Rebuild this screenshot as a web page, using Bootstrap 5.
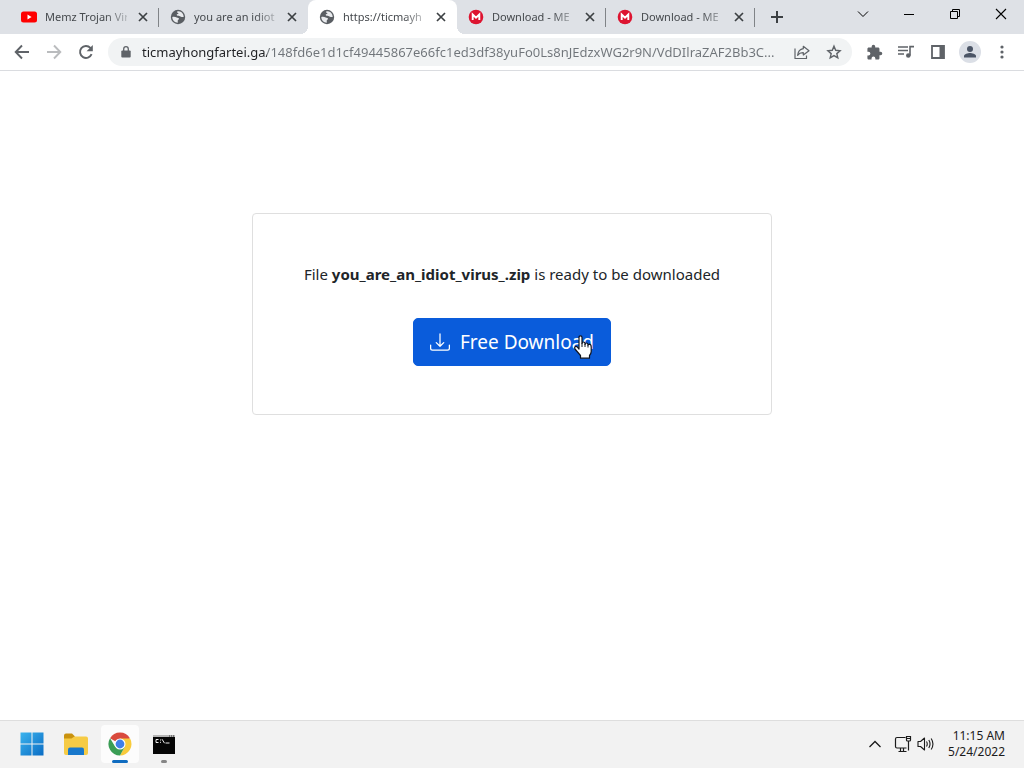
<!DOCTYPE html>
<html lang="en">
<head>
<meta charset="utf-8">
<meta name="viewport" content="width=device-width, initial-scale=1">
<title>Free Download</title>
<link href="https://cdn.jsdelivr.net/npm/bootstrap@5.3.0/dist/css/bootstrap.min.css" rel="stylesheet">
<style>
  body { font-family: "Noto Sans", "Open Sans", sans-serif; font-size: 11px; background: #fff; color: #212529; }
  button { color: inherit; }
  svg { display: block; flex: none; }
  .plain { border: 0; padding: 0; background: transparent; display: flex; align-items: center; justify-content: center; flex: none; }

  /* tab strip */
  .strip { background: #dee1e6; height: 34px; padding-left: 10px; }
  .tab-item { width: 149px; padding: 0 8px 0 11px; gap: 8px; color: #45494d; position: relative; }
  .tab-item.ruled::after { content: ""; position: absolute; right: 0; top: 8px; width: 1px; height: 19px; background: #808387; }
  .tab-item.current { background: #fff; border-radius: 8px 8px 0 0; }
  .tab-item.current::before { content: ""; position: absolute; left: -8px; right: -8px; bottom: 0; height: 8px;
    background: radial-gradient(circle at 0 0, transparent 8px, #fff 8px) left / 8px 8px no-repeat,
                radial-gradient(circle at 100% 0, transparent 8px, #fff 8px) right / 8px 8px no-repeat; }
  .tab-title { color: inherit; text-decoration: none; font-size: 11px; line-height: 18px; white-space: nowrap; overflow: hidden;
    -webkit-mask-image: linear-gradient(to right, #000 60px, transparent 90px); mask-image: linear-gradient(to right, #000 60px, transparent 90px); }
  .tab-close { width: 16px; height: 16px; color: #3c4043; }
  .tab-new { width: 28px; height: 28px; margin: 3px 0 0 8px; color: #3c4043; }
  .win-btn { width: 46px; height: 28px; color: #000; }

  /* toolbar */
  .toolbar { height: 37px; padding: 0 6px; border-bottom: 1px solid #dadce0; color: #5f6368; background: #fff; }
  .tool-btn { width: 32px; height: 32px; }
  .omnibox { height: 28px; border-radius: 14px; background: #f1f3f4; padding: 0 2px 0 10px; margin: 0 6px; }
  .omnibox input { border: 0; outline: 0; padding: 0; margin-left: 8px; font-size: 13px; line-height: 20px; color: #5f6368;
    background: linear-gradient(to right, #202124 125px, #70757a 125px); -webkit-background-clip: text; background-clip: text; -webkit-text-fill-color: transparent; }
  .avatar { width: 22px; height: 22px; border-radius: 50%; background: #dbdfe6; }

  /* page */
  .download-card { width: 520px; max-width: 100%; margin-top: 142px; border-color: #dfdfdf; border-radius: 4px; padding: 48px 16px; }
  .download-card p { font-size: 15px; line-height: 24px; margin-bottom: 32px; }
  .download-btn { background: #0a5cdb; border-color: #0a5cdb; color: #fff; font-size: 19px; line-height: 30px; border-radius: 5px; padding: 8px 16px; gap: 10px; }
  .hand { position: absolute; right: 18px; top: 16px; }

  /* taskbar */
  .taskbar { height: 48px; background: #f2f2f2; border-top: 1px solid #dedede; padding: 0 19px 2px 13px; color: #1b1b1b; }
  .task-list { gap: 6px; }
  .task-btn { width: 38px; height: 38px; border-radius: 4px; position: relative; }
  .task-btn.active { background: #fcfcfc; }
  .task-btn.running::after { content: ""; position: absolute; bottom: 0; width: 6px; height: 3px; border-radius: 2px; background: #868686; }
  .task-btn.active::after { width: 16px; background: #0f6cc0; }
  .tray-btn { width: 28px; }
  .clock { font-size: 12px; line-height: 16px; margin-left: 13px; }
</style>
</head>
<body class="d-flex flex-column min-vh-100">

<svg width="0" height="0" class="position-absolute" aria-hidden="true">
  <symbol id="x" viewBox="0 0 16 16"><path d="M4 4l8 8M12 4l-8 8" stroke="currentColor" stroke-width="1.7" fill="none"/></symbol>
  <symbol id="globe" viewBox="0 0 16 16"><circle cx="8" cy="8" r="7.2" fill="#5a5e63"/><path d="M7.500 2.300C6.900 3 7.100 3.700 7.900 4c.8.300.7 1-.2 1.100-1 .1-1.300.8-.6 1.300.8.600 2.200.3 2.900.9.600.5 1.500.9 3.700.700C13.600 6 12.800 4.300 11.500 3.300 10.400 2.500 9 2.100 7.500 2.300zM2.300 8c1.600-.3 3.300-.1 4.400.5 1 .5 2.300.2 2.300 1.200s-1.300 1-1.300 2c0 .7.200 1.300.1 2C4.700 13.700 2.300 11.200 2.300 8z" fill="#e9ebee"/></symbol>
  <symbol id="mega" viewBox="0 0 16 16"><circle cx="8" cy="8" r="7.300" fill="#dd1430"/><path d="M4.700 11V5.600L8 8.800l3.300-3.200V11" stroke="#fff" stroke-width="1.900" fill="none"/></symbol>
</svg>

<header>
  <nav class="strip d-flex" aria-label="Tabs">
    <div class="tab-item ruled d-flex align-items-center">
      <svg width="16" height="16" viewBox="0 0 16 16"><rect y="2.500" width="16" height="11" rx="2.500" fill="#f00"/><path d="M6.500 5.600v4.800L10.600 8z" fill="#fff"/></svg>
      <a class="tab-title flex-fill" href="#">Memz Trojan Vir</a>
      <button class="plain tab-close" aria-label="Close tab"><svg width="16" height="16"><use href="#x"/></svg></button>
    </div>
    <div class="tab-item d-flex align-items-center">
      <svg width="16" height="16"><use href="#globe"/></svg>
      <a class="tab-title flex-fill" href="#">you are an idiot</a>
      <button class="plain tab-close" aria-label="Close tab"><svg width="16" height="16"><use href="#x"/></svg></button>
    </div>
    <div class="tab-item current d-flex align-items-center">
      <svg width="16" height="16"><use href="#globe"/></svg>
      <a class="tab-title flex-fill" href="#" aria-current="page">https://ticmayh</a>
      <button class="plain tab-close" aria-label="Close tab"><svg width="16" height="16"><use href="#x"/></svg></button>
    </div>
    <div class="tab-item ruled d-flex align-items-center">
      <svg width="16" height="16"><use href="#mega"/></svg>
      <a class="tab-title flex-fill" href="#">Download - ME</a>
      <button class="plain tab-close" aria-label="Close tab"><svg width="16" height="16"><use href="#x"/></svg></button>
    </div>
    <div class="tab-item ruled d-flex align-items-center">
      <svg width="16" height="16"><use href="#mega"/></svg>
      <a class="tab-title flex-fill" href="#">Download - ME</a>
      <button class="plain tab-close" aria-label="Close tab"><svg width="16" height="16"><use href="#x"/></svg></button>
    </div>
    <button class="plain tab-new" aria-label="New tab"><svg width="14" height="14" viewBox="0 0 14 14"><path d="M7 1v12M1 7h12" stroke="currentColor" stroke-width="2"/></svg></button>
    <div class="d-flex ms-auto">
      <button class="plain win-btn" aria-label="Search tabs"><svg width="12" height="8" viewBox="0 0 12 8"><path d="M1 1.500l5 5 5-5" stroke="currentColor" fill="none"/></svg></button>
      <button class="plain win-btn" aria-label="Minimize"><svg width="10" height="10" viewBox="0 0 10 10"><path d="M0 5.500h10" stroke="currentColor"/></svg></button>
      <button class="plain win-btn" aria-label="Restore"><svg width="10" height="10" viewBox="0 0 10 10"><path d="M.5 2.500h7v7h-7zM2.500 2.500v-2h7v7h-2" stroke="currentColor" fill="none"/></svg></button>
      <button class="plain win-btn" aria-label="Close"><svg width="12" height="12" viewBox="0 0 12 12"><path d="M1 1l10 10M11 1L1 11" stroke="currentColor" stroke-width="1.100"/></svg></button>
    </div>
  </nav>

  <div class="toolbar d-flex align-items-center">
    <button class="plain tool-btn" aria-label="Back"><svg width="16" height="16" viewBox="0 0 16 16"><path d="M15 8H2M8 1.500L1.700 8 8 14.500" stroke="currentColor" stroke-width="1.900" fill="none"/></svg></button>
    <button class="plain tool-btn" aria-label="Forward"><svg width="16" height="16" viewBox="0 0 16 16"><path d="M1 8h13M8 1.500L14.300 8 8 14.500" stroke="#babcbe" stroke-width="1.900" fill="none"/></svg></button>
    <button class="plain tool-btn" aria-label="Reload"><svg width="16" height="16" viewBox="0 0 16 16"><path d="M13.600 10.200A6 6 0 1 1 12.400 3.800L13.500 5" stroke="currentColor" stroke-width="1.900" fill="none"/><path d="M14.800 1v6.200H8.600z" fill="currentColor"/></svg></button>
    <div class="omnibox d-flex align-items-center flex-fill">
      <button class="plain" aria-label="Site information"><svg width="16" height="16" viewBox="0 0 16 16"><path d="M4.300 6.500h7.400a1 1 0 0 1 1 1V12.500a1 1 0 0 1-1 1H4.300a1 1 0 0 1-1-1V7.500a1 1 0 0 1 1-1z" fill="currentColor"/><path d="M5.700 7V4.900a2.300 2.300 0 0 1 4.600 0V7" stroke="currentColor" stroke-width="1.300" fill="none"/></svg></button>
      <input type="text" class="flex-fill" aria-label="Address" value="ticmayhongfartei.ga/148fd6e1d1cf49445867e66fc1ed3df38yuFo0Ls8nJEdzxWG2r9N/VdDIlraZAF2Bb3C...">
      <button class="plain tool-btn" aria-label="Share"><svg width="16" height="16" viewBox="0 0 16 16"><path d="M1 4.500V14.500H12.500V11.500M9.300 2.300L15 6.800 9.300 11V8.700C6.500 8.600 4.900 9.500 3.600 11.300 4 7.800 6 5.200 9.300 4.700z" stroke="currentColor" stroke-width="1.200" fill="none" stroke-linejoin="round"/></svg></button>
      <button class="plain tool-btn" aria-label="Bookmark"><svg width="16" height="16" viewBox="0 0 16 16"><path d="M8 2.200l1.700 4.100 4.400.4-3.300 2.900 1 4.300L8 11.600l-3.800 2.300 1-4.300L1.900 6.700l4.400-.4z" stroke="currentColor" stroke-width="1.400" fill="none"/></svg></button>
    </div>
    <button class="plain tool-btn" aria-label="Extensions"><svg width="17" height="17" viewBox="0 0 24 24"><path d="M20.500 11H19V7c0-1.100-.9-2-2-2h-4V3.500a2.500 2.500 0 0 0-5 0V5H4c-1.100 0-2 .9-2 2v3.800h1.500a2.700 2.700 0 0 1 0 5.400H2V20c0 1.100.9 2 2 2h3.800v-1.500a2.700 2.700 0 0 1 5.400 0V22H17c1.100 0 2-.9 2-2v-4h1.500a2.500 2.500 0 0 0 0-5z" fill="currentColor"/></svg></button>
    <button class="plain tool-btn" aria-label="Media controls"><svg width="16" height="16" viewBox="0 0 16 16"><path d="M0 3h10M0 6.500h10M0 10h6" stroke="currentColor" stroke-width="1.600"/><circle cx="10.300" cy="11.500" r="2.300" fill="currentColor"/><path d="M12 11.500V2.600h4" stroke="currentColor" stroke-width="1.600" fill="none"/></svg></button>
    <button class="plain tool-btn" aria-label="Side panel"><svg width="14" height="14" viewBox="0 0 14 14"><path d="M1 1h12v12H1z" stroke="currentColor" stroke-width="1.800" fill="none"/><path d="M8.500 1H13v12H8.500z" fill="currentColor"/></svg></button>
    <button class="plain tool-btn" aria-label="Profile"><span class="avatar d-flex align-items-center justify-content-center"><svg width="14" height="14" viewBox="0 0 14 14"><circle cx="7" cy="4" r="3" fill="#4b5566"/><path d="M1 12.500V11c0-2 4-3 6-3s6 1 6 3v1.500z" fill="#4b5566"/></svg></span></button>
    <button class="plain tool-btn" aria-label="Menu"><svg width="4" height="14" viewBox="0 0 4 14" fill="currentColor"><circle cx="2" cy="2" r="1.600"/><circle cx="2" cy="7" r="1.600"/><circle cx="2" cy="12" r="1.600"/></svg></button>
  </div>
</header>

<main class="container flex-fill">
  <div class="card download-card mx-auto text-center align-items-center">
    <p>File <strong>you_are_an_idiot_virus_.zip</strong> is ready to be downloaded</p>
    <button class="btn download-btn d-inline-flex align-items-center position-relative">
      <svg width="20" height="20" viewBox="0 0 16 16" fill="currentColor"><path d="M.5 9.900a.5.5 0 0 1 .5.5v2.500a1 1 0 0 0 1 1h12a1 1 0 0 0 1-1v-2.500a.5.5 0 0 1 1 0v2.500a2 2 0 0 1-2 2H2a2 2 0 0 1-2-2v-2.500a.5.5 0 0 1 .5-.5z"/><path d="M7.646 11.854a.5.5 0 0 0 .708 0l3-3a.5.5 0 0 0-.708-.708L8.500 10.293V1.500a.5.5 0 0 0-1 0v8.793L5.354 8.146a.5.5 0 1 0-.708.708l3 3z"/></svg>
      <span>Free Download</span>
      <svg class="hand" width="18" height="24" viewBox="0 0 18 24" aria-hidden="true"><path d="M5 14V2.500Q5 .8 6.500.8T8 2.500V8.300Q8.200 7 9.500 7T11 8.500v.8Q11.200 8 12.400 8T14 9.600v.6Q14.200 9.100 15.300 9.100 17.200 9.200 17.200 12v4.500q0 2-1.700 4v2.700H6.500V20.500L1 14Q.2 12.600 1.200 11.800T3.400 12.200z" fill="#fff" stroke="#10131c" stroke-width="1.200" stroke-linejoin="round"/><path d="M8 8v4M11 9v3M14 10v2.500" stroke="#10131c" stroke-width="1"/></svg>
    </button>
  </div>
</main>

<footer class="taskbar d-flex align-items-center">
  <div class="task-list d-flex">
    <button class="plain task-btn" aria-label="Start"><svg width="24" height="24" viewBox="0 0 24 24"><defs><linearGradient id="w" x2="1" y2="1"><stop stop-color="#3bb4ee"/><stop offset="1" stop-color="#0a6cc4"/></linearGradient></defs><path d="M.5.500h11v11H.5zM12.500.500h11v11h-11zM.5 12.500h11v11H.5zM12.500 12.500h11v11h-11z" fill="url(#w)"/></svg></button>
    <button class="plain task-btn" aria-label="File Explorer"><svg width="26" height="24" viewBox="0 0 26 24"><path d="M1 3.500Q1 1.500 3 1.500h6l3 3-3 3H1z" fill="#c9920f"/><path d="M1 6.500h7.500l3-2H23q2 0 2 2V21q0 2-2 2H3q-2 0-2-2z" fill="#f6cb45"/><path d="M5 23v-5.500Q5 15.500 7 15.500h12q2 0 2 2V23z" fill="#1878cc"/></svg></button>
    <button class="plain task-btn running active" aria-label="Google Chrome"><svg width="24" height="24" viewBox="0 0 24 24"><path d="M12 12L2.040 6.250A11.500 11.500 0 0 1 21.960 6.250z" fill="#d94a3d"/><path d="M12 6.500h10.100A11.500 11.500 0 0 1 12 23.500L16.800 14.700z" fill="#f8cb3c"/><path d="M2.040 6.250A11.500 11.500 0 0 0 12 23.500L16.800 14.700 7.200 14.700z" fill="#3a9d55"/><circle cx="12" cy="12" r="5.500" fill="#fff"/><circle cx="12" cy="12" r="4.400" fill="#3f7fe8"/></svg></button>
    <button class="plain task-btn running" aria-label="Command Prompt"><svg width="24" height="22" viewBox="0 0 24 22"><path d="M1 2h22v19H1z" fill="#050505"/><path d="M1 2h22v2H1z" fill="#b5b5b5"/><path d="M17 3h1M19 3h1M21 3h1" stroke="#333"/><path d="M6.500 6.500H4v3h2.500M8.500 6.500v1M8.500 8.800v1M10 6.200l2.500 4M13.500 10h4" stroke="#eee" stroke-width="1" fill="none"/></svg></button>
  </div>
  <div class="d-flex align-items-center ms-auto">
    <button class="plain tray-btn" aria-label="Show hidden icons"><svg width="14" height="10" viewBox="0 0 14 10"><path d="M1.500 8L7 2.500 12.500 8" stroke="currentColor" stroke-width="1.300" fill="none"/></svg></button>
    <button class="plain tray-btn" aria-label="Network"><svg width="18" height="18" viewBox="0 0 18 18"><path d="M11.500 2.500H3Q1.500 2.500 1.500 4v7.500q0 1.500 1.500 1.500h9.500M6.500 13v3M9.500 13v3M4.500 16.500h8M12.500 1.500h4v3.500q0 1-1 1h-2q-1 0-1-1zM12.500 3.500h4M14.500 6v9.500" stroke="currentColor" stroke-width="1.200" fill="none"/></svg></button>
    <button class="plain" aria-label="Volume"><svg width="18" height="16" viewBox="0 0 18 16"><path d="M1 5.500h2.500L7.500 2v12L3.500 10.500H1z" stroke="currentColor" stroke-width="1.100" fill="none" stroke-linejoin="round"/><path d="M9.500 5.500q1.500 2.500 0 5M11.800 4q2.500 4 0 8M14.200 2.500q3.500 5.500 0 11" stroke="currentColor" stroke-width="1.100" fill="none"/></svg></button>
    <button class="plain clock d-block text-end">11:15 AM<br>5/24/2022</button>
  </div>
</footer>

<script src="https://cdn.jsdelivr.net/npm/bootstrap@5.3.0/dist/js/bootstrap.bundle.min.js"></script>
</body>
</html>
